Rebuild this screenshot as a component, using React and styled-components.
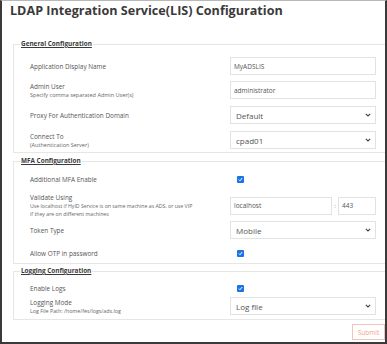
import React from "react";
import styled, { createGlobalStyle } from "styled-components";

const Global = createGlobalStyle`
  html, body { margin: 0; padding: 0; background: #fff; }
  body { font-family: "Open Sans", "Noto Sans", sans-serif; }
  * { box-sizing: border-box; }
`;

const Frame = styled.div`
  width: 387px;
  height: 344px;
  border-top: 1px solid #b8b8b8;
  border-left: 2px solid #3a3a3a;
  border-right: 2px solid #3a3a3a;
  border-bottom: 2px solid #3a3a3a;
  padding: 1px 0 0 8px;
  display: flex;
  flex-direction: column;
  overflow: hidden;
`;

const Title = styled.h1`
  margin: 0;
  font-size: 12.6px;
  line-height: 18px;
  font-weight: 700;
  color: #3a3a3a;
`;

const Sections = styled.div`
  display: flex;
  flex-direction: column;
  margin-left: 3px;
  margin-top: 19px;
`;

const Section = styled.fieldset`
  margin: 0;
  border: 1px solid #e6e6e6;
  border-right: none;
  padding: ${(p) => p.$pt}px 9px ${(p) => p.$pb}px 16px;
  margin-top: ${(p) => p.$mt || 0}px;
  display: flex;
  flex-direction: column;
`;

const Legend = styled.legend`
  font-size: 6.4px;
  line-height: 10px;
  font-weight: 700;
  color: #3a3a3a;
  text-decoration: underline;
  padding: 0 1px;
  margin-left: -10px;
`;

const Row = styled.div`
  display: grid;
  grid-template-columns: 1fr 146px;
  align-items: center;
  height: ${(p) => p.$h}px;
  margin-top: ${(p) => p.$mt || 0}px;
`;

const LabelBox = styled.div`
  display: flex;
  flex-direction: column;
  justify-content: center;
`;

const Label = styled.div`
  font-size: 6.4px;
  line-height: 9px;
  color: #555;
`;

const Sub = styled.div`
  font-size: ${(p) => p.$fs || 5.2}px;
  line-height: 8px;
  color: #666;
  white-space: nowrap;
`;

const Control = styled.div`
  display: flex;
  align-items: center;
  & > * { flex: 1; }
`;

const Input = styled.div`
  height: 18px;
  border: 1px solid #e2e2e2;
  font-size: 6.5px;
  color: #555;
  display: flex;
  align-items: center;
  padding-left: 3px;
  background: #fff;
`;

const Select = styled.div`
  height: 18px;
  border: 1px solid #e2e2e2;
  font-size: 8px;
  color: #555;
  display: flex;
  align-items: center;
  justify-content: space-between;
  padding: 0 4px 0 5px;
  background: #fff;
`;

const Pair = styled.div`
  display: grid;
  grid-template-columns: 102px 6px 1fr;
  align-items: center;
`;

const Colon = styled.span`
  font-size: 6px;
  color: #777;
  text-align: center;
`;

const Check = styled.span`
  flex: 0 0 auto !important;
  width: 7px;
  height: 7px;
  border-radius: 1px;
  background: #1a73e8;
  display: inline-flex;
  align-items: center;
  justify-content: center;
  margin-left: 7px;
`;

const Footer = styled.div`
  display: flex;
  justify-content: flex-end;
  margin-top: 4px;
`;

const Submit = styled.button`
  width: 33px;
  height: 16px;
  border: 1px solid #f5c2b6;
  background: #fff;
  color: #f2a08e;
  font-family: "Open Sans", sans-serif;
  font-size: 6.5px;
  padding: 0;
`;

const Chevron = () => (
  <svg width="6" height="4" viewBox="0 0 6 4">
    <path d="M0.8 0.8 L3 3 L5.2 0.8" fill="none" stroke="#444" strokeWidth="1.1" />
  </svg>
);

const CheckBox = () => (
  <Check>
    <svg width="5" height="5" viewBox="0 0 5 5">
      <path d="M0.8 2.6 L2 3.8 L4.2 1" fill="none" stroke="#fff" strokeWidth="1" />
    </svg>
  </Check>
);

const Field = ({ label, sub, subFs, children, h = 18, mt }) => (
  <Row $h={h} $mt={mt}>
    <LabelBox>
      <Label>{label}</Label>
      {sub &&
        sub.map((s) => (
          <Sub key={s} $fs={subFs}>
            {s}
          </Sub>
        ))}
    </LabelBox>
    <Control>{children}</Control>
  </Row>
);

export default function App() {
  return (
    <>
      <Global />
      <Frame>
        <Title>LDAP Integration Service(LIS) Configuration</Title>
        <Sections>
          <Section $pt={8} $pb={3}>
            <Legend>General Configuration</Legend>
            <Field label="Application Display Name">
              <Input>MyADSLIS</Input>
            </Field>
            <Field
              label="Admin User"
              sub={["Specify comma separated Admin User(s)"]}
              subFs={5.5}
              mt={6}
            >
              <Input>administrator</Input>
            </Field>
            <Field label="Proxy For Authentication Domain" mt={7}>
              <Select>
                Default <Chevron />
              </Select>
            </Field>
            <Field label="Connect To" sub={["(Authentication Server)"]} subFs={5.5} mt={7}>
              <Select>
                cpad01 <Chevron />
              </Select>
            </Field>
          </Section>
          <Section $pt={7} $pb={4} $mt={3}>
            <Legend>MFA Configuration</Legend>
            <Field label="Additional MFA Enable" h={12}>
              <CheckBox />
            </Field>
            <Field
              label="Validate Using"
              sub={[
                "Use localhost if HyID Service is on same machine as ADS, or use VIP",
                "if they are on different machines",
              ]}
              h={18}
              mt={8}
            >
              <Pair>
                <Input>localhost</Input>
                <Colon>:</Colon>
                <Input>443</Input>
              </Pair>
            </Field>
            <Field label="Token Type" mt={10}>
              <Select>
                Mobile <Chevron />
              </Select>
            </Field>
            <Field label="Allow OTP in password" h={12} mt={8}>
              <CheckBox />
            </Field>
          </Section>
          <Section $pt={6} $pb={4} $mt={2}>
            <Legend>Logging Configuration</Legend>
            <Field label="Enable Logs" h={12}>
              <CheckBox />
            </Field>
            <Field
              label="Logging Mode"
              sub={["Log File Path: /home/fes/logs/ads.log"]}
              subFs={5.3}
              mt={3}
            >
              <Select>
                Log file <Chevron />
              </Select>
            </Field>
          </Section>
          <Footer>
            <Submit>Submit</Submit>
          </Footer>
        </Sections>
      </Frame>
    </>
  );
}
